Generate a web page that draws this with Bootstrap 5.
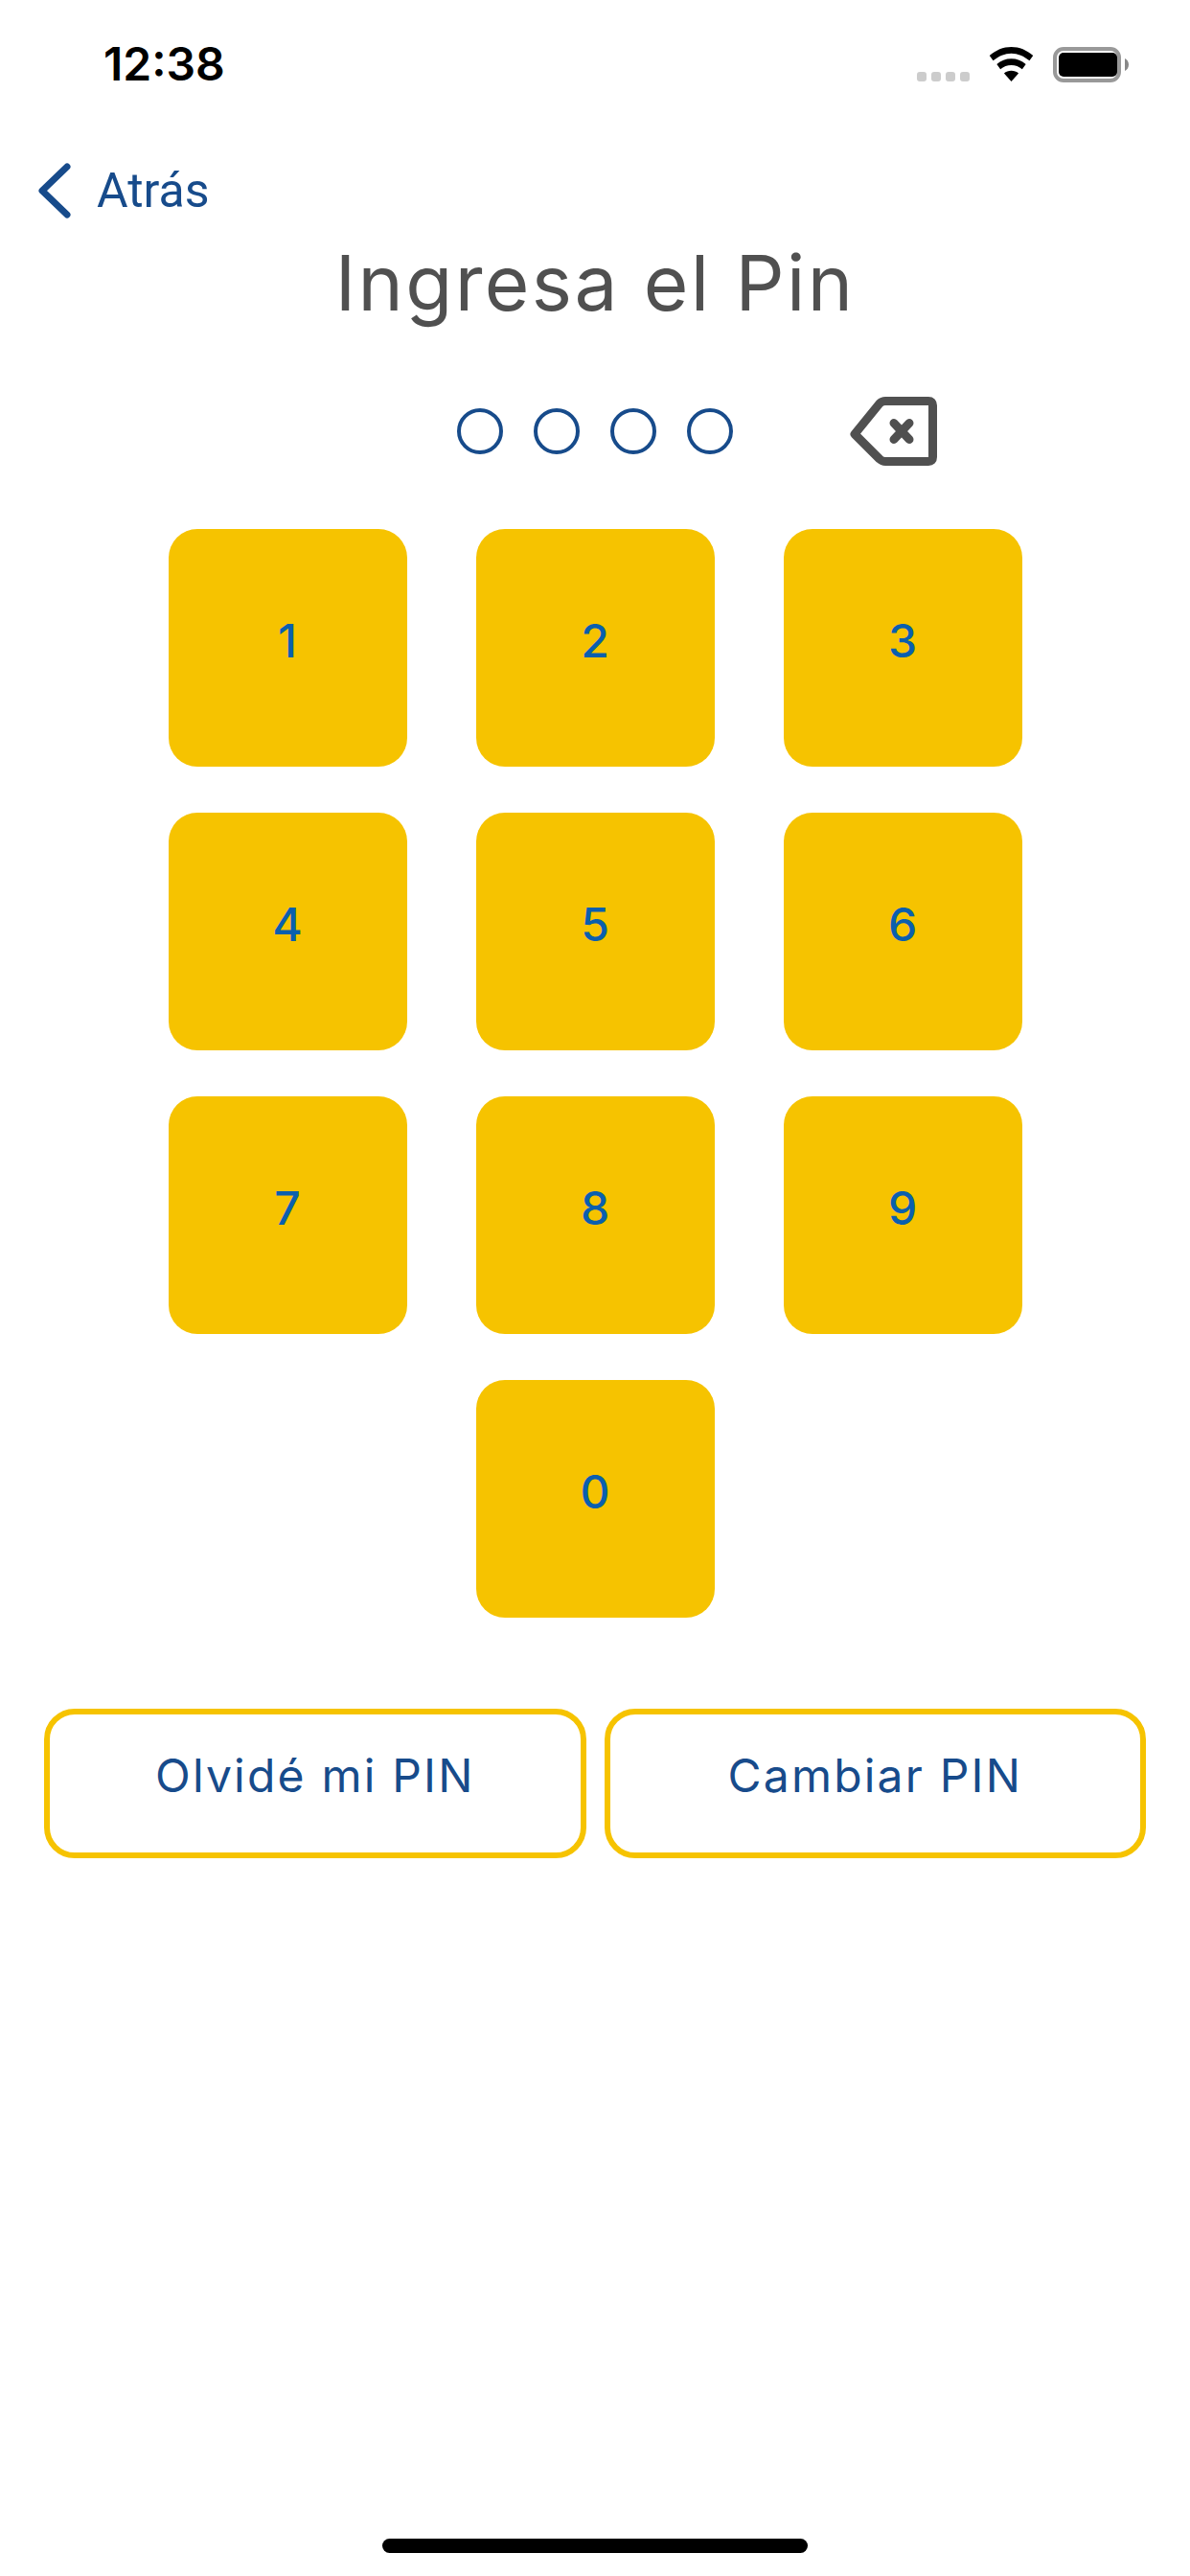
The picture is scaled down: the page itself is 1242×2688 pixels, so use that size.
<!DOCTYPE html>
<html lang="es">
<head>
    <meta charset="UTF-8">
    <meta name="viewport" content="width=device-width, initial-scale=1.0">
    <title>Ingresa el Pin</title>
    <link href="https://cdn.jsdelivr.net/npm/bootstrap@5.3.0/dist/css/bootstrap.min.css" rel="stylesheet">
    <style>
        body {
            font-family: "Liberation Sans", sans-serif;
            background-color: #ffffff;
            width: 1242px;
            height: 2688px;
            overflow: hidden;
        }

        .screen {
            height: 2688px;
        }

        .status-bar {
            height: 167px;
            padding: 49px 64px 0 108px;
        }

        .status-time {
            font-family: Inter, sans-serif;
            font-size: 48px;
            font-weight: 600;
            line-height: 36px;
            color: #000000;
        }

        .status-dots {
            gap: 5px;
            margin-right: 20px;
            padding-top: 26px;
        }

        .status-dot {
            width: 10px;
            height: 10px;
            border-radius: 3px;
            background-color: #cccccc;
        }

        .status-wifi {
            margin-right: 20px;
        }

        .back-row {
            height: 64px;
            padding-left: 39px;
            color: #174b8b;
        }

        .back-label {
            font-family: Roboto, sans-serif;
            font-size: 50px;
            line-height: 64px;
            margin-left: 26px;
        }

        .pin-title {
            font-family: Inter, sans-serif;
            font-size: 80px;
            font-weight: 400;
            letter-spacing: 2.4px;
            line-height: 96px;
            color: #505050;
            margin: 16px 0 0;
        }

        .pin-row {
            height: 72px;
            margin-top: 71px;
        }

        .pin-dot {
            width: 48px;
            height: 48px;
            border: 4px solid #174b8b;
            border-radius: 50%;
        }

        .pin-dots {
            gap: 32px;
            margin-left: 477px;
        }

        .pin-delete {
            margin-left: 122px;
        }

        .keypad {
            display: grid;
            grid-template-columns: repeat(3, 249px);
            grid-auto-rows: 248px;
            column-gap: 72px;
            row-gap: 48px;
            margin-top: 66px;
        }

        .key {
            background-color: #f6c300;
            border: 0;
            border-radius: 30px;
            color: #0a5fae;
            font-family: Inter, sans-serif;
            font-size: 48px;
            font-weight: 500;
            padding: 0 0 14px;
        }

        .key-zero {
            grid-column: 2;
        }

        .action-row {
            gap: 19px;
            padding: 0 46px;
            margin-top: 95px;
        }

        .action-btn {
            width: 566px;
            height: 156px;
            border: 6px solid #f6c300;
            border-radius: 32px;
            background-color: #ffffff;
            color: #174b8b;
            font-family: Inter, sans-serif;
            font-size: 48px;
            font-weight: 400;
            letter-spacing: 2.2px;
            padding: 0 0 16px;
        }

        .home-bar {
            width: 444px;
            height: 15px;
            border-radius: 8px;
            background-color: #000000;
            margin-bottom: 24px;
        }
    </style>
</head>
<body>
    <div class="screen d-flex flex-column">
        <div class="status-bar d-flex justify-content-between">
            <div class="status-time">12:38</div>
            <div class="d-flex align-items-start">
                <div class="status-dots d-flex">
                    <div class="status-dot"></div>
                    <div class="status-dot"></div>
                    <div class="status-dot"></div>
                    <div class="status-dot"></div>
                </div>
                <svg class="status-wifi" width="47" height="36" viewBox="0 0 48 38" fill="#000">
                    <path d="M24 0C15 0 7 3.500 0 9.500L4 15C10 10 17 7 24 7S38 10 44 15L48 9.500C41 3.500 33 0 24 0Z"/>
                    <path d="M24 13C18 13 12.500 15 8 19L12 24.500C15.500 21.500 19.500 20 24 20S32.500 21.500 36 24.500L40 19C35.500 15 30 13 24 13Z"/>
                    <path d="M24 26C21 26 18 27 16 29L24 38L32 29C30 27 27 26 24 26Z"/>
                </svg>
                <svg width="79" height="37" viewBox="0 0 79 37">
                    <rect x="2" y="2" width="67" height="33" rx="9" fill="none" stroke="#999" stroke-width="4"/>
                    <rect x="6" y="6" width="61" height="25" rx="5" fill="#000"/>
                    <path d="M75 12C77 13 79 15 79 18.500S77 24 75 25Z" fill="#888"/>
                </svg>
            </div>
        </div>

        <div class="back-row d-flex align-items-center">
            <svg width="36" height="60" viewBox="0 0 36 60" fill="none">
                <path d="M31 5L5 30L31 55" stroke="#174b8b" stroke-width="7" stroke-linecap="round" stroke-linejoin="round"/>
            </svg>
            <span class="back-label">Atrás</span>
        </div>

        <h1 class="pin-title text-center">Ingresa el Pin</h1>

        <div class="pin-row d-flex align-items-center">
            <div class="pin-dots d-flex">
                <div class="pin-dot"></div>
                <div class="pin-dot"></div>
                <div class="pin-dot"></div>
                <div class="pin-dot"></div>
            </div>
            <svg class="pin-delete" width="91" height="72" viewBox="0 0 91 72" fill="none" stroke="#505050" stroke-linecap="round" stroke-linejoin="round">
                <path d="M37 4.500H82C85 4.500 86.500 6 86.500 9V63C86.500 66 85 67.500 82 67.500H37C34.500 67.500 33 66.800 31 65L5 39L31 7C33 5.200 34.500 4.500 37 4.500Z" stroke-width="9"/>
                <path d="M46 27.500L62 44.500M62 27.500L46 44.500" stroke-width="9"/>
            </svg>
        </div>

        <div class="keypad justify-content-center">
            <button type="button" class="key">1</button>
            <button type="button" class="key">2</button>
            <button type="button" class="key">3</button>
            <button type="button" class="key">4</button>
            <button type="button" class="key">5</button>
            <button type="button" class="key">6</button>
            <button type="button" class="key">7</button>
            <button type="button" class="key">8</button>
            <button type="button" class="key">9</button>
            <button type="button" class="key key-zero">0</button>
        </div>

        <div class="action-row d-flex">
            <button type="button" class="btn action-btn">Olvidé mi PIN</button>
            <button type="button" class="btn action-btn">Cambiar PIN</button>
        </div>

        <div class="home-bar mt-auto mx-auto"></div>
    </div>

    <script src="https://cdn.jsdelivr.net/npm/bootstrap@5.3.0/dist/js/bootstrap.bundle.min.js"></script>
</body>
</html>
